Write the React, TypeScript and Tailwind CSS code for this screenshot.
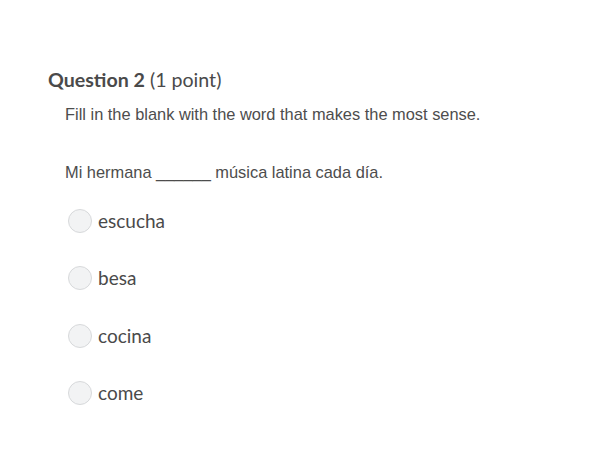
import React from "react";

const options = ["escucha", "besa", "cocina", "come"];

export default function App() {
  return (
    <div className="w-[601px] h-[464px] bg-white relative overflow-hidden">
      <div className="pl-[48px] pt-[68px]">
        <h2 className="text-[19.6px] leading-[24px] text-[#4a4a4a] font-['Lato',sans-serif]">
          <span className="font-bold">Question 2</span>{" "}
          <span className="font-normal">(1 point)</span>
        </h2>
        <div className="pl-[17px] font-['Liberation_Sans',Arial,sans-serif] text-[16.4px] text-[#4d4d4d]">
          <p className="mt-[12px] leading-[20px]">Fill in the blank with the word that makes the most sense.</p>
          <p className="mt-[38px] leading-[20px]">Mi hermana ______ música latina cada día.</p>
        </div>
        <div className="pl-[20px] mt-[27px] flex flex-col gap-[33.3px] font-['Lato',sans-serif] text-[19px] text-[#4a4a4a]">
          {options.map((o) => (
            <label key={o} className="flex items-center h-[24px]">
              <span className="w-[24px] h-[24px] rounded-full border border-[#d7d9db] bg-[#f2f3f4] shrink-0" />
              <span className="ml-[6px] leading-[24px]">{o}</span>
            </label>
          ))}
        </div>
      </div>
    </div>
  );
}
